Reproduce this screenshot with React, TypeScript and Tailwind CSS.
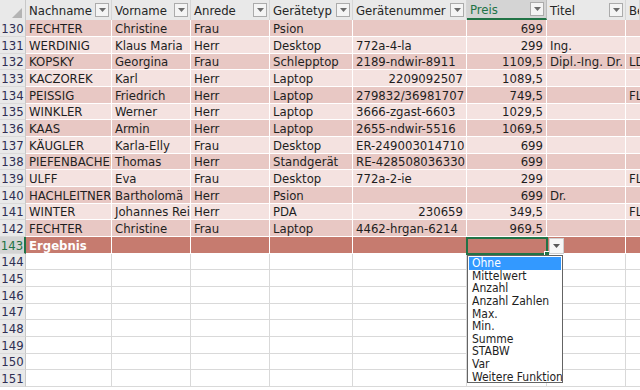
import React from 'react'

const COLS = 'grid grid-cols-[26px_86px_79px_79px_83px_114px_80px_79px_1fr]'
const FONT = 'font-["DejaVu_Sans_Condensed","DejaVu_Sans",sans-serif] font-stretch-condensed'

const HEADERS = ['Nachname', 'Vorname', 'Anrede', 'Gerätetyp', 'Gerätenummer', 'Preis', 'Titel', 'Be']

const ROWS: string[][] = [
  ['FECHTER', 'Christine', 'Frau', 'Psion', '', '699', '', ''],
  ['WERDINIG', 'Klaus Maria', 'Herr', 'Desktop', '772a-4-la', '299', 'Ing.', ''],
  ['KOPSKY', 'Georgina', 'Frau', 'Schlepptop', '2189-ndwir-8911', '1109,5', 'Dipl.-Ing. Dr.', 'LDir.'],
  ['KACZOREK', 'Karl', 'Herr', 'Laptop', '2209092507', '1089,5', '', ''],
  ['PEISSIG', 'Friedrich', 'Herr', 'Laptop', '279832/36981707', '749,5', '', 'FL'],
  ['WINKLER', 'Werner', 'Herr', 'Laptop', '3666-zgast-6603', '1029,5', '', ''],
  ['KAAS', 'Armin', 'Herr', 'Laptop', '2655-ndwir-5516', '1069,5', '', ''],
  ['KÄUGLER', 'Karla-Elly', 'Frau', 'Desktop', 'ER-249003014710', '699', '', ''],
  ['PIEFENBACHER', 'Thomas', 'Herr', 'Standgerät', 'RE-428508036330', '699', '', ''],
  ['ULFF', 'Eva', 'Frau', 'Desktop', '772a-2-ie', '299', '', 'FL'],
  ['HACHLEITNER', 'Bartholomä', 'Herr', 'Psion', '', '699', 'Dr.', ''],
  ['WINTER', 'Johannes Reinhard', 'Herr', 'PDA', '230659', '349,5', '', 'FL'],
  ['FECHTER', 'Christine', 'Frau', 'Laptop', '4462-hrgan-6214', '969,5', '', ''],
]

const MENU = ['Ohne', 'Mittelwert', 'Anzahl', 'Anzahl Zahlen', 'Max.', 'Min.', 'Summe', 'STABW', 'Var', 'Weitere Funktionen...']

function rowHeight(i: number) {
  return i % 3 === 2 ? 'h-4' : 'h-[17px]'
}

function FilterButton() {
  return (
    <span className="flex h-[14px] w-[14px] shrink-0 items-center justify-center border border-[#ababab] bg-[#f4f4f4]">
      <svg width="7" height="4" viewBox="0 0 7 4">
        <path d="M0 0h7L3.5 4z" fill="#6b6b6b" />
      </svg>
    </span>
  )
}

function HeaderRow() {
  return (
    <div className={`${COLS} h-5`}>
      <div className="relative border-r border-[#c8c8c8] bg-[#e9e9e9]">
        <svg className="absolute right-[3px] bottom-[2px]" width="10" height="10" viewBox="0 0 10 10">
          <path d="M10 0v10H0z" fill="#b4b4b4" />
        </svg>
      </div>
      {HEADERS.map((h) => {
        const active = h === 'Preis'
        return (
          <div
            key={h}
            className={`flex items-center justify-between overflow-hidden border-r pl-[3px] pr-[2px] ${
              active
                ? 'border-[#bdbdbd] border-b-2 border-b-[#217346] bg-[#d4d4d4] text-[#217346]'
                : 'border-[#d6d6d6] bg-[#e9e9e9] text-[#262626]'
            }`}
          >
            <span className="whitespace-nowrap">{h}</span>
            {h !== 'Be' && <FilterButton />}
          </div>
        )
      })}
    </div>
  )
}

function DataRow({ n, cells, i }: { n: number; cells: string[]; i: number }) {
  const bg = i % 2 === 0 ? 'bg-[#e8c8c4]' : 'bg-[#f4e2e0]'
  return (
    <div className={`${COLS} ${rowHeight(i)}`}>
      <div className="flex items-center justify-center border-r border-b border-r-[#c8c8c8] border-b-[#dadada] bg-[#e9e9e9] text-[#2e2e52]">
        {n}
      </div>
      {cells.map((c, k) => {
        const right = k === 5 || /^\d+$/.test(c)
        const last = k === 7
        return (
          <div
            key={k}
            className={`flex items-center overflow-hidden whitespace-nowrap border-b border-white px-[3px] text-[#1e1e1e] ${
              last ? '' : 'border-r'
            } ${right ? 'justify-end' : ''} ${bg}`}
          >
            {c}
          </div>
        )
      })}
    </div>
  )
}

function TotalRow() {
  return (
    <div className={`${COLS} h-[17px]`}>
      <div className="flex items-center justify-center border-r-2 border-b border-r-[#217346] border-b-[#dadada] bg-[#d4d4d4] text-[#217346]">
        143
      </div>
      {HEADERS.map((h, k) => (
        <div
          key={h}
          className={`flex items-center overflow-hidden whitespace-nowrap border-b border-white bg-[#c67b6f] px-[3px] font-bold text-white ${
            k === 7 ? '' : 'border-r'
          }`}
        >
          {k === 0 ? 'Ergebnis' : ''}
        </div>
      ))}
    </div>
  )
}

function EmptyRow({ n, i }: { n: number; i: number }) {
  return (
    <div className={`${COLS} ${rowHeight(i)}`}>
      <div className="flex items-center justify-center border-r border-b border-r-[#c8c8c8] border-b-[#dadada] bg-[#e9e9e9] text-[#2e2e52]">
        {n}
      </div>
      {HEADERS.map((h, k) => (
        <div key={h} className={`border-b border-[#d9d9d9] bg-white ${k === 7 ? '' : 'border-r'}`} />
      ))}
    </div>
  )
}

export default function App() {
  return (
    <div className={`relative h-[390px] w-[640px] overflow-hidden bg-white text-[13px] leading-none ${FONT}`}>
      <HeaderRow />
      {ROWS.map((r, i) => (
        <DataRow key={i} n={130 + i} cells={r} i={i} />
      ))}
      <TotalRow />
      {Array.from({ length: 8 }, (_, j) => (
        <EmptyRow key={j} n={144 + j} i={14 + j} />
      ))}

      {/* selected total cell */}
      <div className="absolute top-[237px] left-[466px] h-[18px] w-[82px] border-2 border-[#217346]">
        <span className="absolute -right-[4px] -bottom-[4px] h-[6px] w-[6px] border border-white bg-[#217346]" />
      </div>
      <div className="absolute top-[238px] left-[549px] flex h-4 w-[15px] items-center justify-center border border-[#d0d0d0] bg-[#f7f7f7]">
        <svg width="7" height="4" viewBox="0 0 7 4">
          <path d="M0 0h7L3.5 4z" fill="#5a5a5a" />
        </svg>
      </div>

      {/* total function list */}
      <div className="absolute top-[255px] left-[467px] flex h-[128px] w-[96px] flex-col overflow-hidden border border-[#646464] bg-white p-px text-[12px]">
        {MENU.map((m, k) => (
          <div
            key={m}
            className={`flex h-[12.6px] shrink-0 items-center whitespace-nowrap px-[3px] ${
              k === 0 ? 'bg-[#3399ff] text-white' : 'text-[#1e1e1e]'
            }`}
          >
            {m}
          </div>
        ))}
      </div>
    </div>
  )
}
